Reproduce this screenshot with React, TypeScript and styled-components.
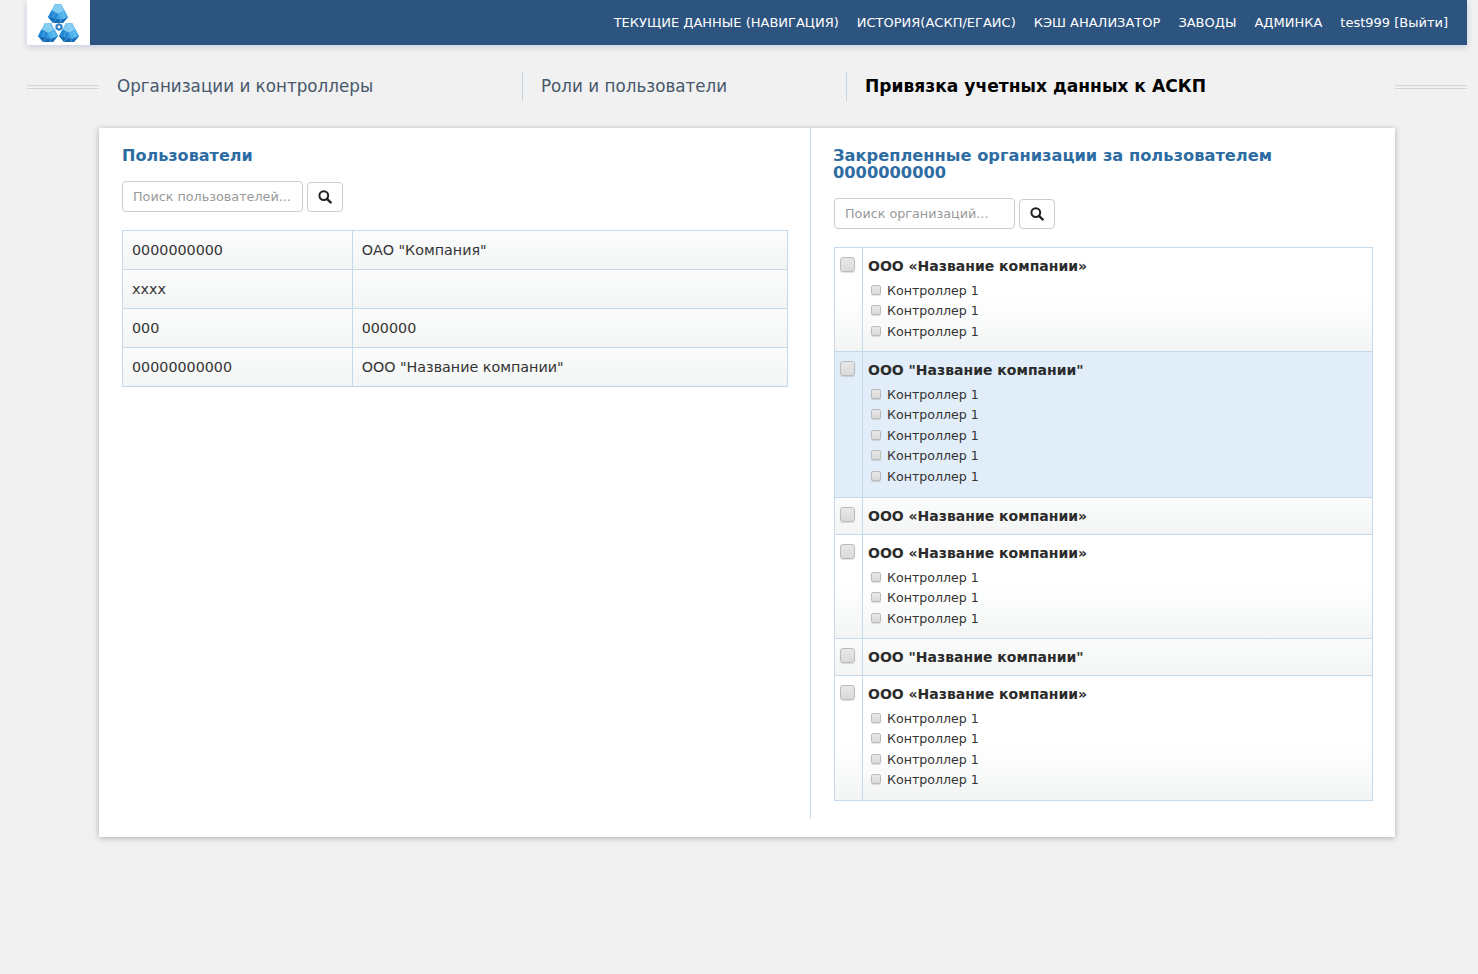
import * as React from 'react';
import styled, { createGlobalStyle } from 'styled-components';

const Global = createGlobalStyle`
  html, body {
    margin: 0;
    padding: 0;
    background: #f1f1f1;
    font-family: "DejaVu Sans", sans-serif;
    color: #333;
  }
  * { box-sizing: border-box; }
`;

const Page = styled.div`
  width: 1478px;
  height: 974px;
  padding: 0 11px 0 27px;
`;

const Header = styled.header`
  display: flex;
  align-items: center;
  justify-content: space-between;
  height: 45px;
  background: #2d547f;
  box-shadow: 0 2px 6px rgba(60, 80, 160, 0.22);
`;

const LogoBox = styled.div`
  display: flex;
  align-items: center;
  justify-content: center;
  width: 63px;
  height: 45px;
  background: #fff;
`;

const Menu = styled.nav`
  display: flex;
  gap: 18px;
  padding-right: 19px;
  padding-top: 1px;
`;

const MenuItem = styled.a`
  color: #fff;
  font-size: 13px;
  line-height: 16px;
  white-space: nowrap;
`;

const Tabs = styled.div`
  display: flex;
  align-items: center;
  height: 29px;
  margin-top: 27px;
`;

const TabLine = styled.div`
  width: 72px;
  height: 4px;
  border-top: 1px solid #d3d6d8;
  border-bottom: 1px solid #d3d6d8;
`;

const Tab = styled.div<{ $width: number; $first?: boolean; $active?: boolean }>`
  display: flex;
  align-items: center;
  width: ${(p) => p.$width}px;
  height: 29px;
  padding: 0 0 2px 18px;
  border-left: ${(p) => (p.$first ? 'none' : '1px solid #c5d3de')};
  font-size: ${(p) => (p.$active ? '17.1px' : '16.75px')};
  font-weight: ${(p) => (p.$active ? 700 : 400)};
  color: ${(p) => (p.$active ? '#000' : '#47586b')};
  white-space: nowrap;
`;

const Card = styled.main`
  display: flex;
  align-items: flex-start;
  width: 1296px;
  height: 709px;
  margin: 27px 0 0 72px;
  background: #fff;
  box-shadow: 0 1px 6px rgba(0, 0, 0, 0.28);
`;

const LeftPane = styled.section`
  width: 711px;
  padding: 19px 22px 0 23px;
`;

const RightPane = styled.section`
  width: 585px;
  height: 691px;
  padding: 19px 22px 0 22px;
  border-left: 1px solid #c6d9ea;
`;

const Title = styled.h2<{ $size: number }>`
  margin: 0;
  font-size: ${(p) => p.$size}px;
  line-height: 17px;
  font-weight: 700;
  color: #2d6ca2;
`;

const SearchRow = styled.div`
  display: flex;
  align-items: flex-end;
  gap: 4px;
  margin-top: 17px;
`;

const RightSearch = styled(SearchRow)`
  margin-left: 1px;
`;

const SearchInput = styled.input`
  width: 181px;
  height: 31px;
  padding: 0 10px;
  border: 1px solid #ccc;
  border-radius: 4px;
  background: #fff;
  font-family: inherit;
  font-size: 12.75px;
  color: #555;
  &::placeholder {
    color: #999;
    opacity: 1;
  }
`;

const SearchButton = styled.button`
  display: flex;
  align-items: center;
  justify-content: center;
  width: 36px;
  height: 30px;
  padding: 0;
  border: 1px solid #ccc;
  border-radius: 4px;
  background: #fff;
`;

const UserTable = styled.div`
  margin-top: 18px;
  border: 1px solid #c6d9ea;
  border-bottom: none;
`;

const UserRow = styled.div`
  display: flex;
  height: 39px;
  border-bottom: 1px solid #c6d9ea;
  background: linear-gradient(to top, #f3f5f5, #fff 55px);
`;

const UserCell = styled.div<{ $wide?: boolean }>`
  display: flex;
  align-items: center;
  width: ${(p) => (p.$wide ? '436px' : '229px')};
  padding-left: 9px;
  border-left: ${(p) => (p.$wide ? '1px solid #c6d9ea' : 'none')};
  font-size: 14.3px;
  color: #333;
`;

const OrgList = styled.div`
  margin-top: 18px;
  margin-left: 1px;
  border: 1px solid #c6d9ea;
  border-bottom: none;
`;

const OrgRow = styled.div<{ $selected?: boolean }>`
  display: flex;
  border-bottom: 1px solid #c6d9ea;
  background: ${(p) =>
    p.$selected ? '#e1edf8' : 'linear-gradient(to top, #f3f5f5, #fff 55px)'};
`;

const CheckCell = styled.div`
  flex: none;
  width: 28px;
  padding: 9px 0 0 5px;
  border-right: 1px solid #c6d9ea;
`;

const OrgBody = styled.div`
  flex: 1;
  padding: 9px 5px 0;
  min-height: 36px;
`;

const OrgName = styled.div`
  font-size: 14px;
  line-height: 18px;
  font-weight: 700;
  color: #2b2b2b;
`;

const Controllers = styled.div<{ $count: number }>`
  height: ${(p) => 13 + p.$count * 21}px;
  padding: 5px 0 0 3px;
`;

const Controller = styled.div`
  display: flex;
  align-items: center;
  gap: 6px;
  height: 20.5px;
  font-size: 12.6px;
  color: #333;
`;

const Check = styled.span<{ $small?: boolean }>`
  display: block;
  flex: none;
  width: ${(p) => (p.$small ? '10px' : '15px')};
  height: ${(p) => (p.$small ? '10px' : '15px')};
  margin-top: ${(p) => (p.$small ? '-1px' : '0')};
  border: 1px solid #bbb;
  border-radius: ${(p) => (p.$small ? '2px' : '3px')};
  background: linear-gradient(#e8e8e8, #dadada);
  box-shadow: 0 1px 1px rgba(0, 0, 0, 0.12);
`;

const users = [
  ['0000000000', 'ОАО "Компания"'],
  ['xxxx', ''],
  ['000', '000000'],
  ['00000000000', 'ООО "Название компании"'],
];

const orgs = [
  { name: 'ООО «Название компании»', count: 3 },
  { name: 'ООО "Название компании"', count: 5, selected: true },
  { name: 'ООО «Название компании»', count: 0 },
  { name: 'ООО «Название компании»', count: 3 },
  { name: 'ООО "Название компании"', count: 0 },
  { name: 'ООО «Название компании»', count: 4 },
];

function Logo() {
  const cluster = (x: number, y: number) => (
    <g transform={`translate(${x} ${y})`}>
      <path d="M7 0 H13 L20 13 L15 19 H5 L0 13 Z" fill="#3a9be0" />
      <path d="M7 0 H13 L16.5 6.5 L10 10 L3.5 6.5 Z" fill="#7fcbf2" />
      <path d="M10 10 L16.5 6.5 L20 13 L13 16 Z" fill="#4fb2ea" />
      <path d="M3.5 6.5 L10 10 L8 15 L0 13 Z" fill="#2388d4" />
      <path d="M0 13 L8 15 L13 16 L20 13 L15 19 H5 Z" fill="#156bb5" />
      <path
        d="M10 1 L13 8 M7 3 L10 5 M6.5 9 L5 14 M15 8.5 L16.5 15 M5 19 L8 15 M12 19 L13 16"
        stroke="#bfe6f9"
        strokeWidth="0.6"
        opacity="0.6"
      />
    </g>
  );
  return (
    <svg width="42" height="38" viewBox="0 0 42 38">
      {cluster(10, 0)}
      {cluster(0, 19)}
      {cluster(21, 19)}
      <path d="M17.5 21 L21 19 L24.5 21 L24.5 25 L21 27 L17.5 25 Z" fill="#2f7fc4" />
      <circle cx="21" cy="23" r="1.4" fill="#fff" />
    </svg>
  );
}

function SearchIcon() {
  return (
    <svg width="14" height="14" viewBox="0 0 14 14" fill="none">
      <circle cx="5.8" cy="5.6" r="4.4" stroke="#222" strokeWidth="2" />
      <path d="M9 8.8 L12.7 12.5" stroke="#222" strokeWidth="2.4" strokeLinecap="round" />
    </svg>
  );
}

export default function App() {
  return (
    <Page>
      <Global />
      <Header>
        <LogoBox>
          <Logo />
        </LogoBox>
        <Menu>
          <MenuItem>ТЕКУЩИЕ ДАННЫЕ (НАВИГАЦИЯ)</MenuItem>
          <MenuItem>ИСТОРИЯ(АСКП/ЕГАИС)</MenuItem>
          <MenuItem>КЭШ АНАЛИЗАТОР</MenuItem>
          <MenuItem>ЗАВОДЫ</MenuItem>
          <MenuItem>АДМИНКА</MenuItem>
          <MenuItem>test999 [Выйти]</MenuItem>
        </Menu>
      </Header>

      <Tabs>
        <TabLine />
        <Tab $first $width={423}>Организации и контроллеры</Tab>
        <Tab $width={324}>Роли и пользователи</Tab>
        <Tab $active $width={549}>Привязка учетных данных к АСКП</Tab>
        <TabLine />
      </Tabs>

      <Card>
        <LeftPane>
          <Title $size={16.05}>Пользователи</Title>
          <SearchRow>
            <SearchInput placeholder="Поиск пользователей..." />
            <SearchButton><SearchIcon /></SearchButton>
          </SearchRow>
          <UserTable>
            {users.map((u, i) => (
              <UserRow key={i}>
                <UserCell>{u[0]}</UserCell>
                <UserCell $wide>{u[1]}</UserCell>
              </UserRow>
            ))}
          </UserTable>
        </LeftPane>

        <RightPane>
          <Title $size={16.25}>
            Закрепленные организации за пользователем
            <br />
            0000000000
          </Title>
          <RightSearch>
            <SearchInput placeholder="Поиск организаций..." />
            <SearchButton><SearchIcon /></SearchButton>
          </RightSearch>
          <OrgList>
            {orgs.map((org, i) => (
              <OrgRow key={i} $selected={org.selected}>
                <CheckCell><Check /></CheckCell>
                <OrgBody>
                  <OrgName>{org.name}</OrgName>
                  {org.count > 0 && (
                    <Controllers $count={org.count}>
                      {Array.from({ length: org.count }, (_, j) => (
                        <Controller key={j}>
                          <Check $small />
                          Контроллер 1
                        </Controller>
                      ))}
                    </Controllers>
                  )}
                </OrgBody>
              </OrgRow>
            ))}
          </OrgList>
        </RightPane>
      </Card>
    </Page>
  );
}
